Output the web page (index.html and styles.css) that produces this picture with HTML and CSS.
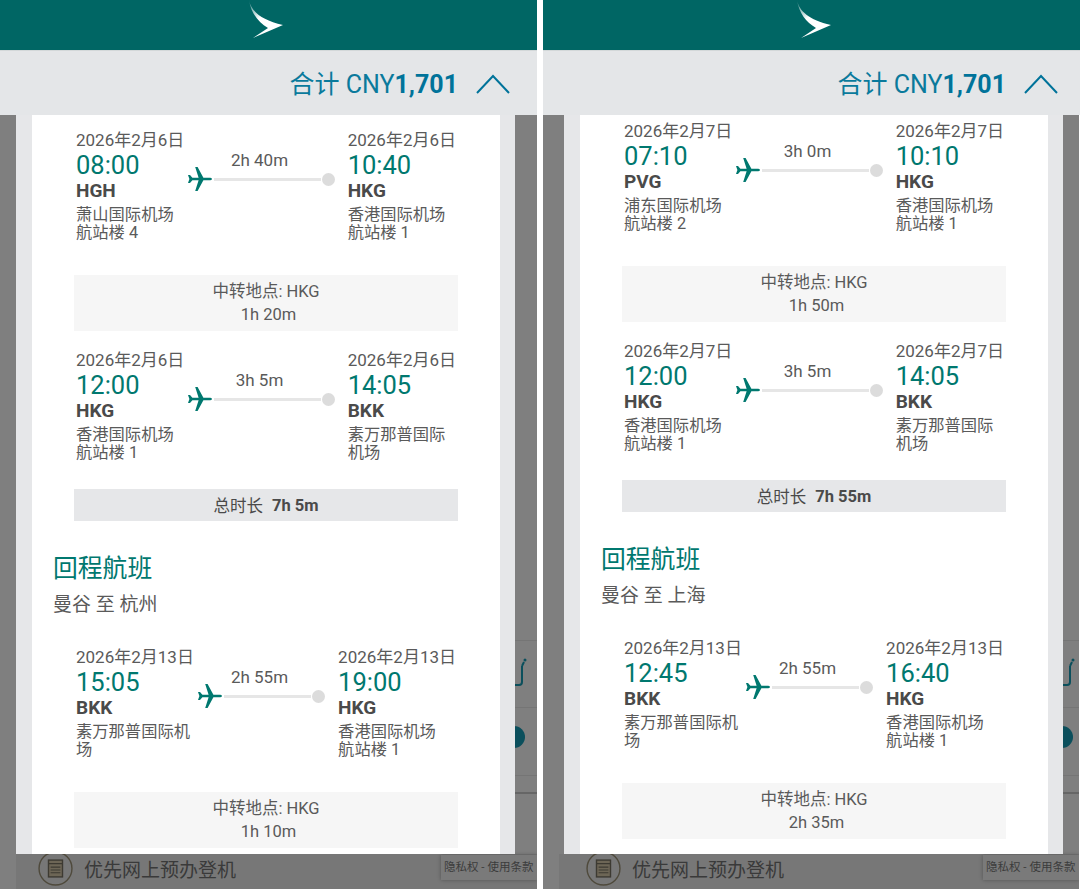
FILE: index.html
```html
<!DOCTYPE html>
<html lang="zh">
<head>
<meta charset="utf-8">
<title>Cathay Pacific</title>
<link rel="stylesheet" href="styles.css">
</head>
<body>
<main class="screens">

<section class="panel panel-a">
  <header class="brand">
    <svg class="logo" viewBox="0 0 36 38"><defs><linearGradient id="wa" x1="0" y1="0" x2="0.4" y2="0.7"><stop offset="0" stop-color="#fff" stop-opacity="0.15"/><stop offset="0.7" stop-color="#fff"/></linearGradient></defs><path fill="url(#wa)" d="M1 0C3 11 13 20 35 25L5 38 20 28C10 22 3 13 1 0Z"/></svg>
  </header>
  <div class="total">
    <span class="total-text">合计 CNY<b>1,701</b></span>
    <svg class="chevron" viewBox="0 0 34 20"><path d="M1 19 17 2 33 19"/></svg>
  </div>
  <div class="stage">
    <div class="behind">
      <span class="rule rule-1"></span><span class="rule rule-2"></span><span class="rule rule-3"></span><span class="rule rule-4"></span>
      <svg class="bag" viewBox="0 0 12 30"><path d="M0 27h4c2 0 3-1 3-3V8M7 8l2-4"/><circle cx="10" cy="2" r="1.5"/></svg>
      <span class="dot-behind"></span>
      <div class="foot"></div>
      <div class="checkin">
        <svg class="checkin-icon" viewBox="0 0 50 50"><circle cx="25" cy="25" r="23.5"/><rect x="15" y="13" width="20" height="24"/><path d="M15 18h20M18 23h14M18 27h14M18 31h14"/></svg>
        <span>优先网上预办登机</span>
      </div>
      <div class="privacy">隐私权 - 使用条款</div>
    </div>
    <div class="modal">
      <div class="sheet">
        <div class="flight">
          <div class="end"><div class="date">2026年2月6日</div><div class="time">08:00</div><div class="code">HGH</div><div class="place">萧山国际机场<br>航站楼 4</div></div>
          <div class="route"><div class="dur">2h 40m</div><div class="track"><svg class="plane" viewBox="0 0 24 24"><path d="M24 12c0-.8-1.2-1.3-3-1.3h-5.6L9.6 0H7.2l3.4 10.7H4.4L2 7.9H0l1.4 4.1L0 16.1h2l2.4-2.8h6.2L7.2 24h2.4l5.8-10.7H21c1.8 0 3-.5 3-1.3z"/></svg><span class="line"></span><span class="stop"></span></div></div>
          <div class="end"><div class="date">2026年2月6日</div><div class="time">10:40</div><div class="code">HKG</div><div class="place">香港国际机场<br>航站楼 1</div></div>
        </div>
        <div class="layover"><div>中转地点: HKG</div><div class="layover-time">1h 20m</div></div>
        <div class="flight">
          <div class="end"><div class="date">2026年2月6日</div><div class="time">12:00</div><div class="code">HKG</div><div class="place">香港国际机场<br>航站楼 1</div></div>
          <div class="route"><div class="dur">3h 5m</div><div class="track"><svg class="plane" viewBox="0 0 24 24"><path d="M24 12c0-.8-1.2-1.3-3-1.3h-5.6L9.6 0H7.2l3.4 10.7H4.4L2 7.9H0l1.4 4.1L0 16.1h2l2.4-2.8h6.2L7.2 24h2.4l5.8-10.7H21c1.8 0 3-.5 3-1.3z"/></svg><span class="line"></span><span class="stop"></span></div></div>
          <div class="end"><div class="date">2026年2月6日</div><div class="time">14:05</div><div class="code">BKK</div><div class="place">素万那普国际机场</div></div>
        </div>
        <div class="duration-total">总时长<b>7h 5m</b></div>
        <h2 class="leg-title">回程航班</h2>
        <p class="leg-route">曼谷 至 杭州</p>
        <div class="flight">
          <div class="end"><div class="date">2026年2月13日</div><div class="time">15:05</div><div class="code">BKK</div><div class="place">素万那普国际机场</div></div>
          <div class="route"><div class="dur">2h 55m</div><div class="track"><svg class="plane" viewBox="0 0 24 24"><path d="M24 12c0-.8-1.2-1.3-3-1.3h-5.6L9.6 0H7.2l3.4 10.7H4.4L2 7.9H0l1.4 4.1L0 16.1h2l2.4-2.8h6.2L7.2 24h2.4l5.8-10.7H21c1.8 0 3-.5 3-1.3z"/></svg><span class="line"></span><span class="stop"></span></div></div>
          <div class="end"><div class="date">2026年2月13日</div><div class="time">19:00</div><div class="code">HKG</div><div class="place">香港国际机场<br>航站楼 1</div></div>
        </div>
        <div class="layover"><div>中转地点: HKG</div><div class="layover-time">1h 10m</div></div>
      </div>
    </div>
  </div>
</section>

<section class="panel panel-b">
  <header class="brand">
    <svg class="logo" viewBox="0 0 36 38"><defs><linearGradient id="wb" x1="0" y1="0" x2="0.4" y2="0.7"><stop offset="0" stop-color="#fff" stop-opacity="0.15"/><stop offset="0.7" stop-color="#fff"/></linearGradient></defs><path fill="url(#wb)" d="M1 0C3 11 13 20 35 25L5 38 20 28C10 22 3 13 1 0Z"/></svg>
  </header>
  <div class="total">
    <span class="total-text">合计 CNY<b>1,701</b></span>
    <svg class="chevron" viewBox="0 0 34 20"><path d="M1 19 17 2 33 19"/></svg>
  </div>
  <div class="stage">
    <div class="behind">
      <span class="rule rule-1"></span><span class="rule rule-2"></span><span class="rule rule-3"></span><span class="rule rule-4"></span>
      <svg class="bag" viewBox="0 0 12 30"><path d="M0 27h4c2 0 3-1 3-3V8M7 8l2-4"/><circle cx="10" cy="2" r="1.5"/></svg>
      <span class="dot-behind"></span>
      <div class="foot"></div>
      <div class="checkin">
        <svg class="checkin-icon" viewBox="0 0 50 50"><circle cx="25" cy="25" r="23.5"/><rect x="15" y="13" width="20" height="24"/><path d="M15 18h20M18 23h14M18 27h14M18 31h14"/></svg>
        <span>优先网上预办登机</span>
      </div>
      <div class="privacy">隐私权 - 使用条款</div>
    </div>
    <div class="modal">
      <div class="sheet">
        <div class="flight">
          <div class="end"><div class="date">2026年2月7日</div><div class="time">07:10</div><div class="code">PVG</div><div class="place">浦东国际机场<br>航站楼 2</div></div>
          <div class="route"><div class="dur">3h 0m</div><div class="track"><svg class="plane" viewBox="0 0 24 24"><path d="M24 12c0-.8-1.2-1.3-3-1.3h-5.6L9.6 0H7.2l3.4 10.7H4.4L2 7.9H0l1.4 4.1L0 16.1h2l2.4-2.8h6.2L7.2 24h2.4l5.8-10.7H21c1.8 0 3-.5 3-1.3z"/></svg><span class="line"></span><span class="stop"></span></div></div>
          <div class="end"><div class="date">2026年2月7日</div><div class="time">10:10</div><div class="code">HKG</div><div class="place">香港国际机场<br>航站楼 1</div></div>
        </div>
        <div class="layover"><div>中转地点: HKG</div><div class="layover-time">1h 50m</div></div>
        <div class="flight">
          <div class="end"><div class="date">2026年2月7日</div><div class="time">12:00</div><div class="code">HKG</div><div class="place">香港国际机场<br>航站楼 1</div></div>
          <div class="route"><div class="dur">3h 5m</div><div class="track"><svg class="plane" viewBox="0 0 24 24"><path d="M24 12c0-.8-1.2-1.3-3-1.3h-5.6L9.6 0H7.2l3.4 10.7H4.4L2 7.9H0l1.4 4.1L0 16.1h2l2.4-2.8h6.2L7.2 24h2.4l5.8-10.7H21c1.8 0 3-.5 3-1.3z"/></svg><span class="line"></span><span class="stop"></span></div></div>
          <div class="end"><div class="date">2026年2月7日</div><div class="time">14:05</div><div class="code">BKK</div><div class="place">素万那普国际机场</div></div>
        </div>
        <div class="duration-total">总时长<b>7h 55m</b></div>
        <h2 class="leg-title">回程航班</h2>
        <p class="leg-route">曼谷 至 上海</p>
        <div class="flight">
          <div class="end"><div class="date">2026年2月13日</div><div class="time">12:45</div><div class="code">BKK</div><div class="place">素万那普国际机场</div></div>
          <div class="route"><div class="dur">2h 55m</div><div class="track"><svg class="plane" viewBox="0 0 24 24"><path d="M24 12c0-.8-1.2-1.3-3-1.3h-5.6L9.6 0H7.2l3.4 10.7H4.4L2 7.9H0l1.4 4.1L0 16.1h2l2.4-2.8h6.2L7.2 24h2.4l5.8-10.7H21c1.8 0 3-.5 3-1.3z"/></svg><span class="line"></span><span class="stop"></span></div></div>
          <div class="end"><div class="date">2026年2月13日</div><div class="time">16:40</div><div class="code">HKG</div><div class="place">香港国际机场<br>航站楼 1</div></div>
        </div>
        <div class="layover"><div>中转地点: HKG</div><div class="layover-time">2h 35m</div></div>
      </div>
    </div>
  </div>
</section>

</main>
</body>
</html>
```

FILE: styles.css
```css
* { box-sizing: border-box; }
html, body { margin: 0; padding: 0; background: #fff; }
body {
  width: 1080px;
  height: 891px;
  overflow: hidden;
  font-family: Roboto, "Noto Sans CJK SC", sans-serif;
  color: #5a5a5a;
}
.screens { display: flex; justify-content: space-between; height: 889px; }
.panel { width: 537px; display: flex; flex-direction: column; }
.panel-a { --shift: 0px; --scroll: 16px; --gutter: 0px; }
.panel-b { --shift: 5px; --scroll: 7px; --gutter: 1px; }

.brand {
  height: 51px;
  flex: none;
  background: #006664;
  padding-left: calc(248px + var(--shift));
  border-bottom: 1px solid #d3d8d9;
  overflow: hidden;
}
.logo { display: block; width: 36px; height: 38px; }

.total {
  height: 64px;
  flex: none;
  background: #e4e6e8;
  display: flex;
  justify-content: flex-end;
  align-items: center;
  gap: 18px;
  padding-right: calc(27px - var(--shift));
}
.total-text { font-size: 25px; color: #0a7a9c; margin-bottom: 3px; }
.total-text b { font-weight: 700; color: #00739a; }
.chevron { width: 34px; height: 20px; margin-top: 2px; }
.chevron path { fill: none; stroke: #00739a; stroke-width: 2; }

.stage { position: relative; flex: 1; background: #7f7f7f; min-height: 0; overflow: hidden; margin-right: var(--gutter); }
.modal {
  position: absolute;
  left: calc(16px + var(--shift));
  top: 0;
  width: 499px;
  height: 739px;
  background: #e6e7e9;
  padding: 0 15px 0 16px;
  overflow: hidden;
}
.sheet { height: 100%; background: #fff; padding: var(--scroll) 42px 0 42px; overflow: hidden; }

.flight { display: flex; padding: 0 2px; height: 137px; }
.end { width: min-content; flex: none; }
.date { font-size: 17px; line-height: 18px; white-space: nowrap; }
.time { font-size: 25.5px; line-height: 30px; color: #00786f; margin-top: 1px; }
.code { font-size: 19px; line-height: 22px; font-weight: 700; color: #4a4a4a; }
.place { font-size: 16.3px; line-height: 18px; margin-top: 4px; }

.route { flex: 1; min-width: 0; padding: 20px 13px 0 4px; }
.dur { font-size: 17px; line-height: 18px; text-align: center; padding-right: 4px; }
.track { display: flex; align-items: center; gap: 2px; margin-top: -2px; }
.plane { width: 24px; height: 24px; flex: none; fill: #00786f; }
.line { flex: 1; height: 3px; background: #e6e6e6; }
.stop { width: 13px; height: 13px; border-radius: 50%; background: #dcdcdc; flex: none; margin-left: -1px; }

.layover {
  background: #f6f6f6;
  height: 56px;
  margin-top: 7px;
  margin-bottom: 20px;
  text-align: center;
  font-size: 16.5px;
  line-height: 23px;
  padding-top: 5px;
}
.layover-time { padding-left: 5px; }
.duration-total {
  background: #e6e7e9;
  height: 32px;
  margin-top: 1px;
  display: flex;
  justify-content: center;
  align-items: center;
  gap: 9px;
  font-size: 16.5px;
  color: #4a4a4a;
}
.duration-total b { font-weight: 700; }
.leg-title { margin: 30px 0 0 -21px; font-size: 24.8px; line-height: 36px; font-weight: 400; color: #00786f; }
.leg-route { margin: 6px 0 31px -21px; font-size: 19px; line-height: 24px; }

.behind { position: absolute; inset: 0; }
.rule { position: absolute; left: 500px; right: 0; height: 1px; background: #757575; }
.rule-1 { top: 525px; }
.rule-2 { top: 592px; }
.rule-3 { top: 660px; }
.rule-4 { top: 677px; height: 2px; background: #666; }
.bag {
  position: absolute;
  left: calc(515px + var(--shift));
  top: 543px;
  width: 12px;
  height: 30px;
}
.bag path { fill: none; stroke: #0b4f5c; stroke-width: 2; }
.bag circle { fill: #0b4f5c; }
.dot-behind {
  position: absolute;
  left: calc(503px + var(--shift));
  top: 611px;
  width: 22px;
  height: 22px;
  border-radius: 50%;
  background: #0b4f5c;
}
.foot { position: absolute; left: 16px; right: 0; top: 739px; bottom: 0; background: #777; }
.checkin {
  position: absolute;
  left: calc(38px + var(--shift));
  top: 736px;
  display: flex;
  align-items: center;
  gap: 11px;
  font-size: 19px;
  color: #3a3a3a;
}
.checkin-icon { width: 35px; height: 35px; }
.checkin-icon circle { fill: none; stroke: #4f4a3c; stroke-width: 2; }
.checkin-icon rect { fill: #6d6656; stroke: #3d3a32; stroke-width: 2; }
.checkin-icon path { fill: none; stroke: #3d3a32; stroke-width: 1.5; }
.privacy {
  position: absolute;
  right: 0;
  top: 740px;
  width: 96px;
  height: 25px;
  background: #7a7a7a;
  box-shadow: 0 0 4px rgba(0,0,0,.3);
  font-size: 11.5px;
  line-height: 25px;
  padding-left: 3px;
  color: #3c3c3c;
  white-space: nowrap;
  overflow: hidden;
}
```
